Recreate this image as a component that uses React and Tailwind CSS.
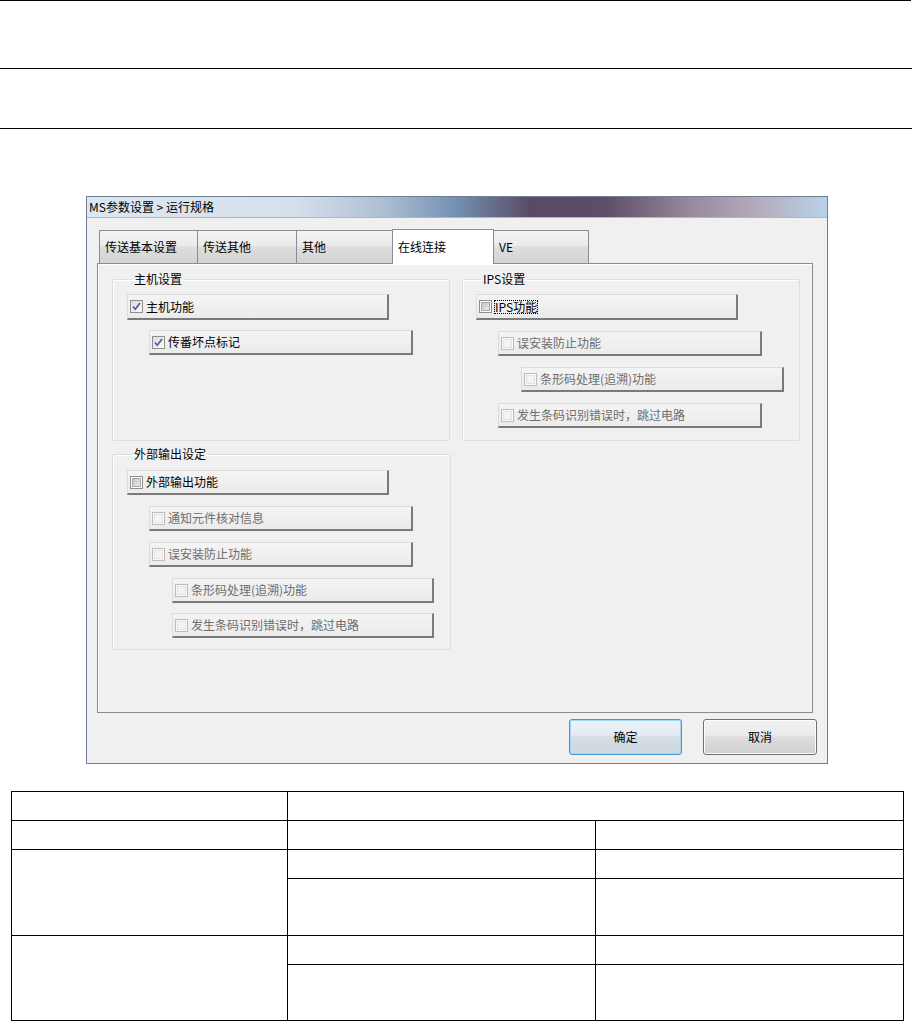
import React from "react";

const Box = ({ checked, disabled }) => {
  if (disabled)
    return (
      <span className="flex h-[13px] w-[13px] shrink-0 items-center justify-center border border-[#bcbcbc] bg-[#fbfbfb]">
        <span className="h-[9px] w-[9px] border border-[#e2e2e2] bg-[#f4f4f4]" />
      </span>
    );
  if (checked)
    return (
      <span className="flex h-[13px] w-[13px] shrink-0 items-center justify-center border border-[#8f8f8f] bg-gradient-to-br from-[#dcdcdc] to-[#fbfbfb]">
        <svg width="11" height="11" viewBox="0 0 11 11">
          <path d="M2 5.5 L4.3 8.2 L9 2" fill="none" stroke="#4a5f97" strokeWidth="1.7" />
        </svg>
      </span>
    );
  return (
    <span className="flex h-[13px] w-[13px] shrink-0 items-center justify-center border border-[#8f8f8f] bg-white">
      <span className="h-[9px] w-[9px] border border-[#a8a8a8] bg-gradient-to-br from-[#c2c2c2] to-[#ededed]" />
    </span>
  );
};

const CheckBtn = ({ label, checked, disabled, focus, className = "" }) => (
  <div
    className={`flex items-center gap-[3px] border border-[#dcdcdc] border-r-2 border-b-2 border-r-[#7a7a7a] border-b-[#7a7a7a] bg-gradient-to-b from-[#f4f4f4] to-[#ebebeb] pl-[2px] text-[12px] leading-none ${
      disabled ? "text-[#6d6d6d]" : "text-black"
    } ${className}`}
  >
    <Box checked={checked} disabled={disabled} />
    <span className={focus ? "outline-1 outline-dotted outline-black" : ""}>{label}</span>
  </div>
);

const Group = ({ title, className = "", children }) => (
  <fieldset className={`flex flex-col rounded-[2px] border border-[#d5dfe5] shadow-[inset_1px_1px_0_#fff] ${className}`}>
    <legend className="ml-[5px] px-[2px] text-[12px] leading-[16px] text-black">{title}</legend>
    {children}
  </fieldset>
);

const tabs = [
  { label: "传送基本设置", w: "w-[99px]" },
  { label: "传送其他", w: "w-[100px]" },
  { label: "其他", w: "w-[97px]" },
  { label: "在线连接", w: "w-[102px]", active: true },
  { label: "VE", w: "w-[96px]" },
];

const Cell = ({ className = "", ...rest }) => (
  <td className={`border border-black p-0 ${className}`} {...rest} />
);

export default function App() {
  return (
    <div className="min-h-[1022px] w-[914px] bg-white pb-[2px] font-['Noto_Sans_CJK_SC','Noto_Sans',sans-serif]">
      <div className="h-px w-[911px] bg-black" />
      <div className="mt-[67px] h-px w-[912px] bg-black" />
      <div className="mt-[59px] h-px w-[912px] bg-black" />

      {/* dialog */}
      <div className="ml-[86px] mt-[67px] flex h-[568px] w-[742px] flex-col border border-[#6f7e92] bg-[#f0f0f0]">
        <div className="flex h-[20px] items-center bg-[linear-gradient(90deg,#dde7f1_0%,#d5e0ec_28%,#aebfd3_40%,#7290b2_50%,#5a4a63_60%,#5e4d66_70%,#9a8b9f_82%,#b3a9b8_90%,#b9d2e8_100%)] pl-[2px] text-[12px] text-black">
          MS参数设置 &gt; 运行规格
        </div>

        <div className="flex flex-1 flex-col border-t border-[#a9b8c8] pt-[11px]">
          {/* tabs */}
          <div className="ml-[12px] flex h-[34px] items-end">
            {tabs.map((t, i) => (
              <div
                key={i}
                className={`${t.w} ${i > 0 ? "-ml-px" : ""} flex items-center border border-b-0 border-[#898c95] pl-[5px] text-[12px] text-black ${
                  t.active
                    ? "relative z-10 -mb-px h-[35px] items-start bg-white pt-[8px]"
                    : "h-[33px] bg-[linear-gradient(180deg,#f3f3f3_0%,#ebebeb_45%,#dddddd_50%,#d4d4d4_100%)]"
                }`}
              >
                {t.label}
              </div>
            ))}
          </div>

          {/* panel */}
          <div className="ml-[10px] flex h-[450px] w-[716px] gap-[11px] border border-[#898c95] bg-[#f0f0f0] pl-[14px] pt-[7px] shadow-[inset_1px_1px_0_#fff]">
            <div className="flex flex-col gap-[5px]">
              <Group title="主机设置" className="h-[170px] w-[338px] pl-[14px]">
                <CheckBtn label="主机功能" checked className="mt-[7px] h-[26px] w-[262px]" />
                <CheckBtn label="传番坏点标记" checked className="ml-[22px] mt-[10px] h-[25px] w-[264px]" />
              </Group>
              <Group title="外部输出设定" className="h-[204px] w-[339px] pl-[14px]">
                <CheckBtn label="外部输出功能" className="mt-[8px] h-[25px] w-[262px]" />
                <CheckBtn label="通知元件核对信息" disabled className="ml-[22px] mt-[11px] h-[25px] w-[264px]" />
                <CheckBtn label="误安装防止功能" disabled className="ml-[22px] mt-[11px] h-[25px] w-[264px]" />
                <CheckBtn label="条形码处理(追溯)功能" disabled className="ml-[45px] mt-[11px] h-[25px] w-[262px]" />
                <CheckBtn label="发生条码识别错误时，跳过电路" disabled className="ml-[45px] mt-[10px] h-[25px] w-[262px]" />
              </Group>
            </div>
            <Group title="IPS设置" className="h-[170px] w-[338px] pl-[13px]">
              <CheckBtn label="IPS功能" focus className="mt-[7px] h-[26px] w-[262px]" />
              <CheckBtn label="误安装防止功能" disabled className="ml-[22px] mt-[11px] h-[25px] w-[264px]" />
              <CheckBtn label="条形码处理(追溯)功能" disabled className="ml-[45px] mt-[11px] h-[25px] w-[263px]" />
              <CheckBtn label="发生条码识别错误时，跳过电路" disabled className="ml-[22px] mt-[11px] h-[25px] w-[264px]" />
            </Group>
          </div>

          {/* buttons */}
          <div className="mr-[10px] mt-[6px] flex justify-end gap-[21px]">
            <button className="h-[36px] w-[113px] rounded-[3px] border border-[#3c9bd6] bg-[linear-gradient(180deg,#eef3f7_0%,#e4ebf0_45%,#d4dde3_50%,#cfd8de_100%)] text-[12px] text-black shadow-[inset_0_0_0_1px_#a6d8f3]">
              确定
            </button>
            <button className="h-[36px] w-[114px] rounded-[3px] border border-[#707070] bg-[linear-gradient(180deg,#f2f2f2_0%,#ebebeb_45%,#dddddd_50%,#cfcfcf_100%)] text-[12px] text-black shadow-[inset_0_0_0_1px_#fcfcfc]">
              取消
            </button>
          </div>
        </div>
      </div>

      {/* table */}
      <table className="ml-[11px] mt-[27px] w-[893px] table-fixed border-collapse">
        <tbody>
          <tr className="h-[29px]">
            <Cell className="w-[276px]" />
            <Cell colSpan={2} />
          </tr>
          <tr className="h-[29px]">
            <Cell />
            <Cell className="w-[308px]" />
            <Cell />
          </tr>
          <tr className="h-[29px]">
            <Cell rowSpan={2} />
            <Cell />
            <Cell />
          </tr>
          <tr className="h-[57px]">
            <Cell />
            <Cell />
          </tr>
          <tr className="h-[29px]">
            <Cell rowSpan={2} />
            <Cell />
            <Cell />
          </tr>
          <tr className="h-[56px]">
            <Cell />
            <Cell />
          </tr>
        </tbody>
      </table>
    </div>
  );
}
